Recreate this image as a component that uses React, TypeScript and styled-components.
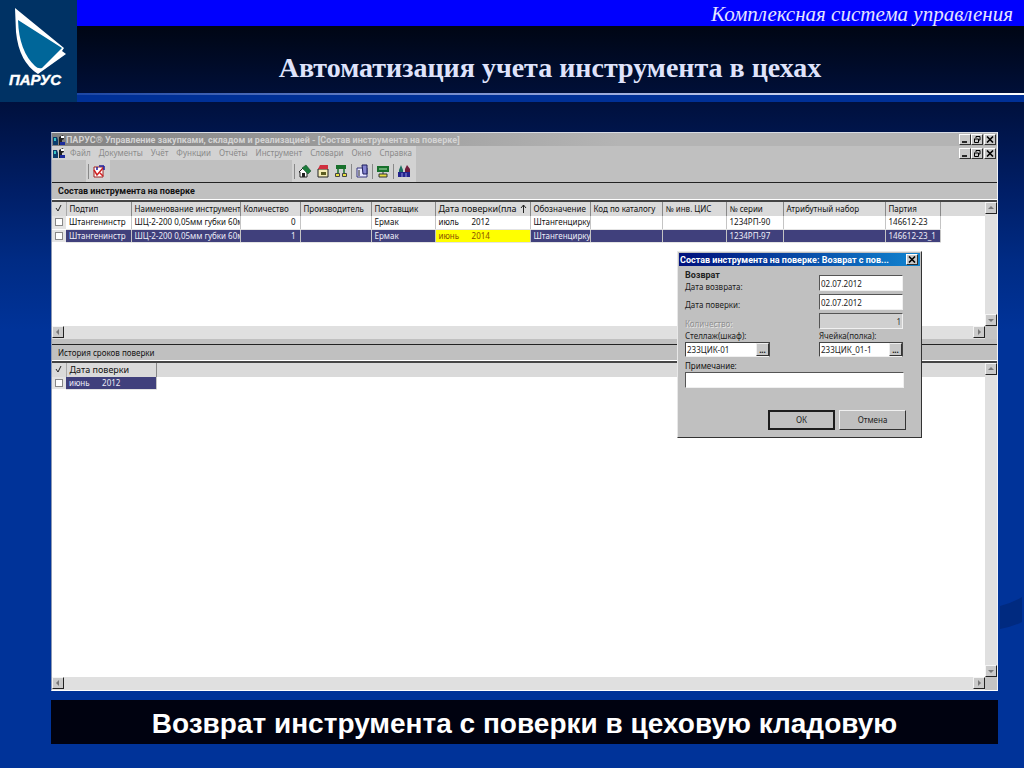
import React from "react";
import styled, { createGlobalStyle, css } from "styled-components";

const GlobalStyle = createGlobalStyle`
  * { box-sizing: border-box; }
  body { margin: 0; background: #003399; }
`;

const ui = `"Noto Sans", "Liberation Sans", sans-serif`;
const heavy = `bold 9px/12px Roboto, "Liberation Sans", sans-serif`;

const Slide = styled.main`
  position: relative;
  min-height: 100vh;
  display: flex;
  flex-direction: column;
  overflow: hidden;
  font-family: ${ui};
  font-size: 8px;
  line-height: 12px;
  color: #111;
  background: linear-gradient(180deg, #000614 26px, #00103c 100px, #001e66 190px, #002b84 260px, #003399 330px);
`;

const Wave = styled.svg`
  position: absolute;
  right: 0;
  top: 596px;
`;

const Header = styled.header`
  display: flex;
  height: 102px;
`;

const LogoBox = styled.div`
  flex: none;
  width: 77px;
  background: #003264;
`;

const HeaderMain = styled.div`
  flex: 1;
  display: flex;
  flex-direction: column;
`;

const System = styled.p`
  margin: 0;
  height: 26px;
  padding-right: 11px;
  background: #0000fe;
  color: #e4e4ff;
  text-align: right;
  font: italic 21px/28px "Liberation Serif", serif;
`;

const Title = styled.h1`
  margin: 0;
  flex: 1;
  padding-right: 1px;
  color: #dfe3fb;
  text-align: center;
  font: bold 28px/84px "Liberation Serif", serif;
  height: 67px;
`;

const Rule = styled.div`
  height: 9px;
  background: #003096;
  border-top: 2px solid;
  border-image: linear-gradient(90deg, #1c46a4, #8fa0d8 50%, #ffffff) 1;
`;

const AppWindow = styled.section`
  position: relative;
  flex: 1;
  display: flex;
  flex-direction: column;
  margin: 30px 26px 0 51px;
  background: #c0c0c0;
  border: 1px solid #d8dce4;
  border-left-color: #8c98b4;
  border-bottom-color: #ffffff;
  border-right-color: #eef2fa;
`;

const TitleBar = styled.div`
  display: flex;
  align-items: center;
  height: 13px;
  padding-right: 1px;
  background: linear-gradient(90deg, #828282, #b4b4b4 60%, #b4b4b4);
  color: #d4d4d4;
  font: ${heavy};
`;

const WindowName = styled.span`
  flex: 1;
  white-space: nowrap;
`;

const WinButtons = styled.div`
  display: flex;
  margin-left: auto;
`;

const WinButton = styled.button`
  display: grid;
  place-items: center;
  width: 12px;
  height: 11px;
  padding: 0;
  border: 1px solid;
  border-color: #fff #303030 #303030 #fff;
  background: #c8c8c8;
  &:last-child { margin-left: 1px; }
`;

const MenuBar = styled.div`
  display: flex;
  align-items: center;
  height: 14px;
  padding-right: 1px;
`;

const Menu = styled.nav`
  display: flex;
  align-items: center;
  gap: 4px;
  height: 14px;
  width: 364px;
  background: #d2d2d2;
  color: #8a8a8a;
`;

const MenuItems = styled.div`
  display: flex;
  gap: 8px;
`;

const MenuItem = styled.a`
  color: inherit;
  text-decoration: none;
`;

const ToolBar = styled.div`
  display: flex;
  height: 22px;
  padding-left: 34px;
`;

const Divider = styled.i`
  width: 1px;
  height: 15px;
  background: #888;
`;

const ToolButton = styled.button`
  padding: 0;
  border: 0;
  background: none;
  width: 14px;
  height: 14px;
  svg { display: block; }
  & + & { margin-left: 1px; }
`;

const ToolGroup = styled.div<{ $wide?: boolean }>`
  display: flex;
  align-items: center;
  gap: 3px;
  padding: 0 4px 0 2px;
  background: #d2d2d2;
  ${(p) => p.$wide && css`margin-left: 182px; width: 124px; padding: 0 2px;`}
`;

const Caption = styled.h2<{ $strong?: boolean }>`
  margin: 0;
  padding-left: 6px;
  height: ${(p) => (p.$strong ? 18 : 17)}px;
  border-top: 1px solid #222;
  border-bottom: 1px solid #fff;
  font-size: 8px;
  line-height: 16px;
  font-weight: normal;
  ${(p) => p.$strong && css`font: ${heavy}; line-height: 17px;`}
`;

const Pane = styled.div<{ $grow: number }>`
  flex: ${(p) => p.$grow} 1 0;
  display: grid;
  grid-template-columns: 1fr 12px;
  grid-template-rows: 1fr 13px;
  min-height: 100px;
  border-top: 2px solid #444;
  background: #fff;
`;

const Gap = styled.div`
  height: 5px;
  background: #c0c0c0;
`;

const Track = styled.div<{ $row?: boolean }>`
  display: flex;
  flex-direction: ${(p) => (p.$row ? "row" : "column")};
  justify-content: space-between;
  background: #e0e0e0;
`;

const ArrowButton = styled.button`
  display: grid;
  place-items: center;
  width: 12px;
  height: 12px;
  padding: 0;
  background: #cacaca;
  border: 1px solid;
  border-color: #f4f4f4 #222 #222 #f4f4f4;
`;

const Corner = styled.div`
  background: #c4c4c4;
`;

const Scroller = styled.div`
  overflow: hidden;
  min-width: 0;
`;

const Table = styled.table`
  width: 100%;
  table-layout: fixed;
  border-collapse: collapse;
`;

const Th = styled.th<{ $large?: boolean }>`
  height: 14px;
  padding: 0 0 0 3px;
  overflow: hidden;
  white-space: nowrap;
  text-align: left;
  font-weight: normal;
  font-size: ${(p) => (p.$large ? 9 : 8)}px;
  line-height: 12px;
  background: #dadada;
  border-right: 1px solid #888;
  &:first-child { border-right-color: #aaa; }
  &:last-child { border-right: 0; }
`;

const SortArrow = styled.svg`
  float: right;
  margin: 1px 3px 0 0;
`;

const Td = styled.td<{ $selected?: boolean; $due?: boolean; $right?: boolean }>`
  height: 13px;
  padding: 0 0 0 3px;
  overflow: hidden;
  white-space: pre;
  line-height: 12px;
  border-right: 1px solid #c4c4c4;
  border-bottom: 1px solid #e4e4e4;
  ${(p) => p.$right && css`text-align: right; padding-right: 4px;`}
  ${(p) => p.$selected && css`background: #40407c; color: #eeeef8;`}
  ${(p) => p.$due && css`background: #ffff00; color: #8a5000;`}
`;

const TickCell = styled.td`
  height: 13px;
  padding: 0 0 0 3px;
  background: #e4e4e4;
  border-bottom: 1px solid #fff;
`;

const Filler = styled.td``;

const Tick = styled.input`
  appearance: none;
  display: block;
  width: 8px;
  height: 8px;
  margin: 0;
  border: 1px solid #888;
  background: #fff;
`;

const Dialog = styled.form`
  position: absolute;
  top: 118px;
  right: 75px;
  width: 245px;
  padding: 1px;
  background: #c0c0c0;
  border: 1px solid;
  border-color: #e8e8e8 #333 #333 #e8e8e8;
`;

const DialogTitle = styled.div`
  display: flex;
  align-items: center;
  height: 13px;
  padding: 0 2px 0 1px;
  background: linear-gradient(90deg, #00107c, #1084d0);
  color: #fff;
  font: ${heavy};
`;

const Fields = styled.div`
  display: grid;
  grid-template-columns: 85px 84px;
  column-gap: 49px;
  padding: 4px 5px 0 6px;
  color: #222;
`;

const Labels = styled.div`
  display: flex;
  flex-direction: column;
`;

const GroupName = styled.strong`
  font: ${heavy};
  line-height: 11px;
`;

const Label = styled.label<{ $off?: boolean; $after?: number }>`
  display: block;
  line-height: 12px;
  white-space: nowrap;
  margin-bottom: ${(p) => p.$after || 0}px;
  ${(p) => p.$off && css`color: #909090; text-shadow: 1px 1px #e8e8e8;`}
`;

const Inputs = styled.div`
  display: flex;
  flex-direction: column;
  gap: 3px;
  padding-top: 5px;
`;

const Input = styled.input<{ $right?: boolean }>`
  display: block;
  width: 100%;
  min-width: 0;
  height: 16px;
  padding: 0 1px;
  border: 1px solid;
  border-color: #555 #f0f0f0 #f0f0f0 #555;
  border-radius: 0;
  outline: 0;
  background: #fff;
  color: #222;
  font: 8px/12px ${ui};
  ${(p) => p.$right && css`text-align: right;`}
  &:disabled { background: #d0d0d0; color: #333; }
`;

const Picker = styled.div`
  display: flex;
  height: 15px;
  border: 1px solid #444;
  border-bottom-color: #f0f0f0;
  background: #fff;
  ${Input} { flex: 1; border: 0; height: 13px; }
`;

const PickButton = styled.button`
  flex: none;
  width: 13px;
  padding: 0;
  border: 1px solid;
  border-color: #eee #333 #333 #eee;
  background: #c8c8c8;
  color: #111;
  font: bold 8px/6px ${ui};
`;

const Note = styled.div`
  padding: 3px 16px 0 6px;
`;

const Actions = styled.div`
  display: flex;
  justify-content: flex-end;
  gap: 4px;
  padding: 22px 14px 6px 0;
`;

const Action = styled.button<{ $primary?: boolean }>`
  width: 67px;
  height: 20px;
  padding: 0;
  background: #c0c0c0;
  color: #222;
  font: 8px/12px ${ui};
  border: 1px solid;
  border-color: #f0f0f0 #333 #333 #f0f0f0;
  ${(p) => p.$primary && css`border: 2px solid #1c1c1c;`}
`;

const Footer = styled.footer`
  margin: 9px 26px 24px 51px;
  background: #000210;
  color: #fff;
  text-align: center;
  font: bold 28px/44px "Liberation Sans", sans-serif;
  height: 44px;
  padding-top: 2px;
`;

function Logo() {
  return (
    <svg width="77" height="102" viewBox="0 0 77 102">
      <path d="M15 8L64 48L62 51L66 54L38 74Q19 62 16 32Z" fill="#fff" />
      <path d="M18 20L62 48L42 68Q38 69 35 66Q19 51 18 20Z" fill="#006699" />
      <text x="9" y="85" fill="#fff" stroke="#fff" strokeWidth="0.4" fontFamily="Liberation Sans, sans-serif" fontWeight="bold" fontStyle="italic" fontSize="15">ПАРУС</text>
    </svg>
  );
}

function AppIcon() {
  return (
    <svg width="14" height="12" viewBox="0 0 14 12">
      <path d="M1 3h4l1 3v5H1z" fill="#0a3c6c" />
      <path d="M2 4h2v3H2z" fill="#39c4c4" />
      <path d="M7 3l4-2 1 4-2 1v5H7z" fill="#222" />
      <path d="M9 2h3v2H9z" fill="#fff" />
      <path d="M8 8h5v3H8z" fill="#1c2c9c" />
    </svg>
  );
}

type Arrow = "up" | "down" | "left" | "right";
const arrows: Record<Arrow, string> = {
  up: "M1 5L4 2L7 5Z",
  down: "M1 3L4 6L7 3Z",
  left: "M5 1L2 4L5 7Z",
  right: "M3 1L6 4L3 7Z",
};

function Scroll({ dir }: { dir: Arrow }) {
  return (
    <ArrowButton type="button" aria-label={dir}>
      <svg width="8" height="8"><path d={arrows[dir]} fill="#777" /></svg>
    </ArrowButton>
  );
}

function CloseGlyph() {
  return (
    <svg width="8" height="7"><path d="M1 0.5L7 6.5M7 0.5L1 6.5" stroke="#000" strokeWidth="1.6" /></svg>
  );
}

function Controls() {
  return (
    <WinButtons>
      <WinButton type="button" aria-label="Свернуть">
        <svg width="8" height="7"><path d="M1 6h5" stroke="#000" strokeWidth="1.6" /></svg>
      </WinButton>
      <WinButton type="button" aria-label="Восстановить">
        <svg width="8" height="7" fill="none" stroke="#000"><path d="M3 2V0.500h4V4H5.500M1 3h4.500M1.500 3v3.500h4V3" /></svg>
      </WinButton>
      <WinButton type="button" aria-label="Закрыть"><CloseGlyph /></WinButton>
    </WinButtons>
  );
}

const CheckGlyph = () => (
  <svg width="8" height="8"><path d="M1 4l2 3 3-6" fill="none" stroke="#222" /></svg>
);

const tools: Record<string, React.ReactNode> = {
  form: <><path d="M2 3h9v10H2z" fill="#fff" stroke="#a02020" /><path d="M2 6l3 5 6-7M8 9l3 3" stroke="#d02020" strokeWidth="1.500" fill="none" /><path d="M7 2h5M12 2v4M5 3v3" stroke="#2020a0" strokeWidth="1.500" /></>,
  home: <><path d="M1 8l4-4 4 4v5H2V8z" fill="#fff" stroke="#222" /><path d="M4 4l4-3 5 6-3 3z" fill="#1c7c3c" stroke="#114422" strokeWidth="0.5" /><path d="M4 9h3v4H4z" fill="#222" /></>,
  folder: <><path d="M2 5h10v8H2z" fill="#f4ecb4" stroke="#222" /><path d="M4 1h8v4H2z" fill="#d03040" /><path d="M5 8h5v3H5z" fill="#5c5c20" /></>,
  tree: <><path d="M2 1h10v4H2z" fill="#18702c" /><path d="M4 5v4M10 5v4" stroke="#18702c" strokeWidth="1.500" fill="none" /><path d="M1.500 9.500h4v3h-4zM8.500 9.500h4v3h-4z" fill="#e8e040" stroke="#444" /></>,
  page: <><path d="M2 4h10v9H2z" fill="#e8e8ff" stroke="#34347c" /><path d="M7 1h5v9H8z" fill="#8484d0" stroke="#1c1c5c" /><path d="M4 6v6" stroke="#222" /></>,
  board: <><path d="M1 2h12v6H1z" fill="#18702c" /><path d="M3 5h8" stroke="#b4e4b4" /><path d="M7 8v2M3 10h8v3H3z" fill="#e8e040" stroke="#333" /></>,
  people: <><path d="M2 6l2-5 2 5v6H2z" fill="#1c7060" /><path d="M8 5l2-4 3 4v7H8z" fill="#701c3c" /><path d="M1 8h12v5H1z" fill="#24248c" /><path d="M5 9v4M9 9v4" stroke="#9090e0" /></>,
};

function Tool({ name }: { name: string }) {
  return (
    <ToolButton type="button" aria-label={name}>
      <svg width="14" height="14" viewBox="0 0 14 14">{tools[name]}</svg>
    </ToolButton>
  );
}

const menu = ["Файл", "Документы", "Учёт", "Функции", "Отчёты", "Инструмент", "Словари", "Окно", "Справка"];

const columns: [string, number][] = [
  ["Подтип", 65], ["Наименование инструмента", 109], ["Количество", 60], ["Производитель", 71],
  ["Поставщик", 64], ["Дата поверки(пла", 95], ["Обозначение", 60], ["Код по каталогу", 72],
  ["№ инв. ЦИС", 64], ["№ серии", 57], ["Атрибутный набор", 102], ["Партия", 55],
];

const rows = [
  ["Штангенинстр", "ШЦ-2-200 0,05мм губки 60м", "0", "", "Ермак", "июль      2012", "Штангенцирку", "", "", "1234РП-90", "", "146612-23"],
  ["Штангенинстр", "ШЦ-2-200 0,05мм губки 60м", "1", "", "Ермак", "июнь      2014", "Штангенцирку", "", "", "1234РП-97", "", "146612-23_1"],
];

const Col = styled.col<{ $w?: number }>`
  width: ${(p) => (p.$w ? p.$w + "px" : "auto")};
`;

function PaneFrame({ grow, children }: { grow: number; children: React.ReactNode }) {
  return (
    <Pane $grow={grow}>
      <Scroller>{children}</Scroller>
      <Track><Scroll dir="up" /><Scroll dir="down" /></Track>
      <Track $row><Scroll dir="left" /><Scroll dir="right" /></Track>
      <Corner />
    </Pane>
  );
}

function ToolsTable() {
  return (
    <Table>
      <colgroup>
        <Col $w={14} />
        {columns.map(([name, w]) => <Col key={name} $w={w} />)}
        <Col />
      </colgroup>
      <thead>
        <tr>
          <Th><CheckGlyph /></Th>
          {columns.map(([name], i) => (
            <Th key={name} $large={i === 5}>
              {i === 5 && <SortArrow width="7" height="9"><path d="M3.500 9V1M1 4l2.500-3L6 4" fill="none" stroke="#222" /></SortArrow>}
              {name}
            </Th>
          ))}
          <Th />
        </tr>
      </thead>
      <tbody>
        {rows.map((row, r) => (
          <tr key={r}>
            <TickCell><Tick type="checkbox" aria-label={row[9]} /></TickCell>
            {row.map((text, i) => (
              <Td key={i} $selected={r === 1} $due={r === 1 && i === 5} $right={i === 2}>{text}</Td>
            ))}
            <Filler />
          </tr>
        ))}
      </tbody>
    </Table>
  );
}

function HistoryTable() {
  return (
    <Table>
      <colgroup><Col $w={14} /><Col $w={90} /><Col /></colgroup>
      <thead>
        <tr><Th><CheckGlyph /></Th><Th $large>Дата поверки</Th><Th /></tr>
      </thead>
      <tbody>
        <tr>
          <TickCell><Tick type="checkbox" aria-label="июнь 2012" /></TickCell>
          <Td $selected>{"июнь      2012"}</Td>
          <Filler />
        </tr>
      </tbody>
    </Table>
  );
}

function ReturnDialog() {
  return (
    <Dialog onSubmit={(e) => e.preventDefault()}>
      <DialogTitle>
        <WindowName>Состав инструмента на поверке: Возврат с пов...</WindowName>
        <WinButton type="button" aria-label="Закрыть"><CloseGlyph /></WinButton>
      </DialogTitle>
      <Fields>
        <Labels>
          <GroupName>Возврат</GroupName>
          <Label htmlFor="returned" $after={6}>Дата возврата:</Label>
          <Label htmlFor="checked" $after={7}>Дата поверки:</Label>
          <Label htmlFor="count" $off>Количество:</Label>
        </Labels>
        <Inputs>
          <Input id="returned" defaultValue="02.07.2012" />
          <Input id="checked" defaultValue="02.07.2012" />
          <Input id="count" defaultValue="1" $right disabled />
        </Inputs>
        <div>
          <Label htmlFor="rack">Стеллаж(шкаф):</Label>
          <Picker><Input id="rack" defaultValue="233ЦИК-01" /><PickButton type="button">...</PickButton></Picker>
        </div>
        <div>
          <Label htmlFor="shelf">Ячейка(полка):</Label>
          <Picker><Input id="shelf" defaultValue="233ЦИК_01-1" /><PickButton type="button">...</PickButton></Picker>
        </div>
      </Fields>
      <Note>
        <Label htmlFor="note">Примечание:</Label>
        <Input id="note" />
      </Note>
      <Actions>
        <Action type="submit" $primary>ОК</Action>
        <Action type="button">Отмена</Action>
      </Actions>
    </Dialog>
  );
}

export default function App() {
  return (
    <>
      <GlobalStyle />
      <Slide>
        <Wave width="24" height="34"><path d="M0 10Q12 7 22 1V26Q12 31 0 33Z" fill="#002a80" /></Wave>
        <Header>
          <LogoBox><Logo /></LogoBox>
          <HeaderMain>
            <System>Комплексная система управления</System>
            <Title>Автоматизация учета инструмента в цехах</Title>
            <Rule />
          </HeaderMain>
        </Header>
        <AppWindow>
          <TitleBar>
            <AppIcon />
            <WindowName>ПАРУС® Управление закупками, складом и реализацией - [Состав инструмента на поверке]</WindowName>
            <Controls />
          </TitleBar>
          <MenuBar>
            <Menu>
              <AppIcon />
              <MenuItems>
                {menu.map((m) => <MenuItem key={m} href="#">{m}</MenuItem>)}
              </MenuItems>
            </Menu>
            <Controls />
          </MenuBar>
          <ToolBar>
            <ToolGroup><Divider /><Tool name="form" /></ToolGroup>
            <ToolGroup $wide>
              <Divider /><Tool name="home" /><Tool name="folder" /><Tool name="tree" />
              <Divider /><Tool name="page" /><Divider /><Tool name="board" /><Divider /><Tool name="people" />
            </ToolGroup>
          </ToolBar>
          <Caption $strong>Состав инструмента на поверке</Caption>
          <PaneFrame grow={137}><ToolsTable /></PaneFrame>
          <Gap />
          <Caption>История сроков поверки</Caption>
          <PaneFrame grow={328}><HistoryTable /></PaneFrame>
          <ReturnDialog />
        </AppWindow>
        <Footer>Возврат инструмента с поверки в цеховую кладовую</Footer>
      </Slide>
    </>
  );
}
